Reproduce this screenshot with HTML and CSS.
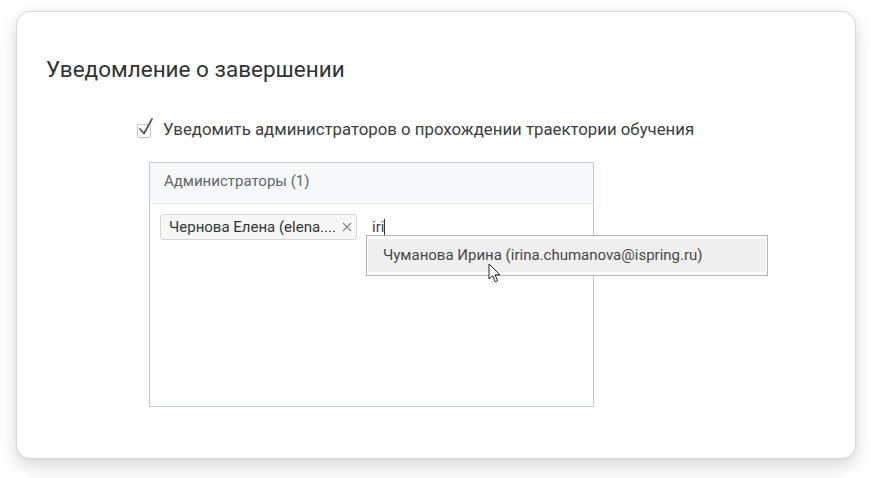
FILE: index.html
```html
<!DOCTYPE html>
<html lang="ru">
<head>
<meta charset="utf-8">
<title>Уведомление о завершении</title>
<link rel="stylesheet" href="styles.css">
</head>
<body>
<div class="card">
  <h2 class="title">Уведомление о завершении</h2>
  <div class="section">
    <label class="check-row">
      <span class="checkbox">
        <svg width="18" height="20" viewBox="0 0 18 20"><path d="M3 12 L7 16.5 L15 2" fill="none" stroke="#555" stroke-width="1.8" stroke-linecap="round" stroke-linejoin="round"/></svg>
      </span>
      <span class="check-label">Уведомить администраторов о прохождении траектории обучения</span>
    </label>
    <div class="panel">
      <div class="panel-head">Администраторы (1)</div>
      <div class="panel-body">
        <span class="tag"><span class="tag-text">Чернова Елена (elena....</span><svg class="tag-x" width="10" height="10" viewBox="0 0 10 10"><path d="M1 1 L9 9 M9 1 L1 9" stroke="#8a8a8a" stroke-width="1.3" fill="none"/></svg></span>
        <span class="input">iri<span class="caret"></span>
          <div class="dropdown">
            <div class="item">Чуманова Ирина (irina.chumanova@ispring.ru)</div>
            <svg class="pointer" width="14" height="21" viewBox="0 0 14 21"><path d="M1 1 L1 16 L4.6 12.6 L7.2 18.8 L9.6 17.8 L7 11.8 L12 11.8 Z" fill="#fff" stroke="#222" stroke-width="1" stroke-linejoin="round"/></svg>
          </div>
        </span>
      </div>
    </div>
  </div>
</div>
</body>
</html>
```

FILE: styles.css
```css
* { box-sizing: border-box; }
html, body { margin: 0; padding: 0; background: #fff; }
body {
  min-height: 478px;
  padding: 11px 16px 0 16px;
  font-family: Roboto, "Noto Sans", "Liberation Sans", sans-serif;
  color: #333;
}
.card {
  width: 840px;
  height: 448px;
  border: 1px solid #d9d9d9;
  border-radius: 14px;
  background: #fff;
  box-shadow: 0 8px 18px rgba(0,0,0,0.14), 0 0 6px rgba(0,0,0,0.05);
  padding: 43px 29px 0 29px;
}
.title {
  margin: 0;
  font-size: 22.5px;
  line-height: 28px;
  font-weight: 400;
  color: #333;
}
.section {
  margin-top: 36px;
  padding-left: 91px;
}
.check-row {
  display: flex;
  align-items: center;
  height: 20px;
}
.checkbox {
  position: relative;
  width: 14px;
  height: 14px;
  border: 1px solid #c4c4c4;
  border-radius: 2px;
  margin-top: 3px;
  flex: none;
}
.checkbox svg {
  position: absolute;
  left: -1px;
  top: -8px;
}
.check-label {
  margin-left: 12px;
  font-size: 16.8px;
  line-height: 20px;
  color: #3d3d3d;
}
.panel {
  margin-top: 23px;
  margin-left: 12px;
  width: 445px;
  height: 245px;
  border: 1px solid #bccbd6;
}
.panel-head {
  background: #f6f8fa;
  border-bottom: 1px solid #e6ebef;
  padding: 8px 14px 12px;
  font-size: 15px;
  line-height: 20px;
  color: #5f666b;
}
.panel-body {
  display: flex;
  align-items: center;
  padding: 10px 10px;
}
.tag {
  display: flex;
  align-items: center;
  width: 197px;
  height: 26px;
  padding: 0 4px 0 8px;
  background: #f7f7f7;
  border: 1px solid #d6d6d6;
  border-radius: 3px;
  font-size: 15px;
  color: #333;
}
.tag-text { flex: 1; white-space: nowrap; }
.tag-x { flex: none; }
.input {
  position: relative;
  margin-left: 15px;
  font-size: 15px;
  line-height: 20px;
  color: #444;
}
.caret {
  display: inline-block;
  width: 1px;
  height: 16px;
  background: #333;
  vertical-align: -3px;
}
.dropdown {
  position: absolute;
  left: -6px;
  top: 18px;
  width: 402px;
  height: 41px;
  border: 1px solid #b3b3b3;
  background: #fff;
  padding: 3px 1px 2px 1px;
}
.item {
  height: 33px;
  background: #efefef;
  padding-left: 15px;
  font-size: 15px;
  line-height: 33px;
  color: #484848;
  white-space: nowrap;
}
.pointer {
  position: absolute;
  left: 121px;
  top: 27px;
}
```
